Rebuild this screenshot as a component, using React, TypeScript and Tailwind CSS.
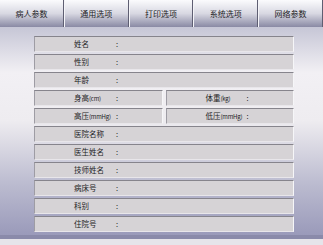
import React from "react";

const tabs = ["病人参数", "通用选项", "打印选项", "系统选项", "网络参数"];

type Row = { left: string; right?: string };

const rows: Row[] = [
  { left: "姓名" },
  { left: "性别" },
  { left: "年龄" },
  { left: "身高(cm)", right: "体重(kg)" },
  { left: "高压(mmHg)", right: "低压(mmHg)" },
  { left: "医院名称" },
  { left: "医生姓名" },
  { left: "技师姓名" },
  { left: "病床号" },
  { left: "科别" },
  { left: "住院号" },
];

const cell =
  "flex-1 h-[16px] bg-[#d6d3d6] border-t border-l border-r border-b border-t-[#86848c] border-l-[#9e9ca4] border-r-[#f6f6f8] border-b-[#e8e6ea] flex items-center pl-[39px]";

function Label({ text }: { text: string }) {
  const i = text.indexOf("(");
  if (i < 0) return <>{text}</>;
  // 单位部分字号更小
  return (
    <>
      {text.slice(0, i)}
      <span className="text-[6px] tracking-[-0.2px]">{text.slice(i)}</span>
    </>
  );
}

function Field({ label, wide }: { label: string; wide: number }) {
  return (
    <div className={cell}>
      <span className={`${wide === 42 ? "w-[42px]" : "w-[41px]"} shrink-0 whitespace-nowrap`}>
        <Label text={label} />
      </span>
      <span>:</span>
    </div>
  );
}

export default function App() {
  return (
    <div
      className="w-[323px] h-[245px] overflow-hidden flex flex-col text-[7.5px] leading-none text-[#1c1c24]"
      style={{ fontFamily: '"Noto Sans CJK SC", "Noto Sans", sans-serif' }}
    >
      {/* 标签栏 */}
      <div className="h-[27px] flex shrink-0 text-[8px]">
        {tabs.map((t, i) => (
          <div
            key={t}
            className={`flex-1 flex items-center justify-center bg-gradient-to-b from-[#fbfbfd] via-[#d8d8e2] to-[#8a8aa4] border-r border-r-[#5e5e72] ${
              i > 0 ? "border-l border-l-[#f4f4f8]" : ""
            }`}
          >
            {t}
          </div>
        ))}
      </div>

      {/* 参数区 */}
      <div className="flex-1 bg-[linear-gradient(to_bottom,#c6c6d6_0%,#f2f0f4_22%,#eeecf0_45%,#bcbcd0_75%,#9a9aba_100%)] pt-[9px] pl-[34px] pr-[29px] flex flex-col gap-[2px]">
        {rows.map((r) => (
          <div key={r.left} className="flex gap-[3px]">
            <Field label={r.left} wide={42} />
            {r.right && <Field label={r.right} wide={41} />}
          </div>
        ))}
      </div>
      <div className="h-[4px] bg-[#8a8aaa] shrink-0" />
      <div className="h-[6px] bg-[#e6e4ea] shrink-0" />
    </div>
  );
}
